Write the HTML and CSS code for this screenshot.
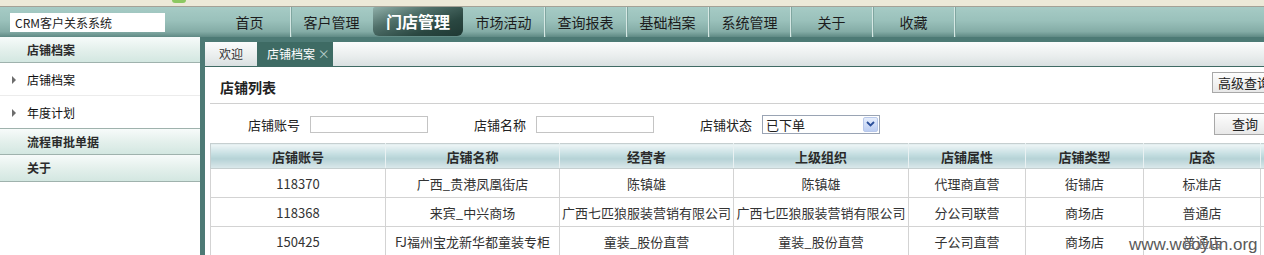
FILE: index.html
```
<!DOCTYPE html>
<html lang="zh">
  <head>
    <meta charset="UTF-8" />
    <title>CRM客户关系系统</title>
    <link rel="stylesheet" href="styles.css">
  </head>
  <body>
    <div class="browserbar">
      <span class="bit"></span>
    </div>

    <header class="topbar">
      <div class="logo">CRM客户关系系统</div>
      <nav class="mainnav">
        <a>首页</a>
        <a class="nosep">客户管理</a>
        <a class="aktiv">门店管理</a>
        <a>市场活动</a>
        <a>查询报表</a>
        <a>基础档案</a>
        <a>系统管理</a>
        <a>关于</a>
        <a>收藏</a>
      </nav>
    </header>

    <main>
      <aside class="sidemenu">
        <div class="menuhead first">店铺档案</div>
        <div class="menuitem">店铺档案</div>
        <div class="menuitem">年度计划</div>
        <div class="menuhead">流程审批单据</div>
        <div class="menuhead">关于</div>
      </aside>

      <section class="content">
        <div class="tabs">
          <span class="tab">欢迎</span>
          <span class="tab valgt">店铺档案 <i>×</i></span>
        </div>

        <div class="paneltitle">
          <h2>店铺列表</h2>
          <button class="knap avanceret">高级查询</button>
        </div>

        <div class="filter">
          <label>店铺账号</label>
          <input type="text" />
          <label>店铺名称</label>
          <input type="text" />
          <label>店铺状态</label>
          <div class="vaelger">
            <span>已下单</span>
            <span class="pil">
              <svg width="9" height="6" viewBox="0 0 9 6"><path d="M1 1 L4.5 4.5 L8 1" fill="none" stroke="#2b4f9a" stroke-width="1.8"/></svg>
            </span>
          </div>
          <button class="knap soeg">查询</button>
        </div>

        <table class="liste">
          <colgroup>
            <col style="width: 175px" />
            <col style="width: 174px" />
            <col style="width: 174px" />
            <col style="width: 175px" />
            <col style="width: 117px" />
            <col style="width: 118px" />
            <col style="width: 117px" />
            <col style="width: 117px" />
          </colgroup>
          <thead>
            <tr>
              <th>店铺账号</th>
              <th>店铺名称</th>
              <th>经营者</th>
              <th>上级组织</th>
              <th>店铺属性</th>
              <th>店铺类型</th>
              <th>店态</th>
              <th></th>
            </tr>
          </thead>
          <tbody>
            <tr>
              <td>118370</td>
              <td>广西_贵港凤凰街店</td>
              <td>陈镇雄</td>
              <td>陈镇雄</td>
              <td>代理商直营</td>
              <td>街铺店</td>
              <td>标准店</td>
              <td></td>
            </tr>
            <tr>
              <td>118368</td>
              <td>来宾_中兴商场</td>
              <td>广西七匹狼服装营销有限公司</td>
              <td>广西七匹狼服装营销有限公司</td>
              <td>分公司联营</td>
              <td>商场店</td>
              <td>普通店</td>
              <td></td>
            </tr>
            <tr>
              <td>150425</td>
              <td>FJ福州宝龙新华都童装专柜</td>
              <td>童装_股份直营</td>
              <td>童装_股份直营</td>
              <td>子公司直营</td>
              <td>商场店</td>
              <td>普通店</td>
              <td></td>
            </tr>
          </tbody>
        </table>
      </section>
    </main>

    <div class="watermark">www.wooyun.org</div>
  </body>
</html>
```

FILE: styles.css
```
* {
  padding: 0;
  margin: 0;
  box-sizing: border-box;
}

body {
  width: 1264px;
  height: 255px;
  overflow: hidden;
  position: relative;
  background-color: #4d7a75;
  font-family: "Noto Sans CJK SC", sans-serif;
  font-size: 13px;
  color: #222;
}

/* browser-stribe */

.browserbar {
  position: relative;
  height: 7px;
  background-color: #ece9d8;
  border-bottom: 1px solid #a4a196;
}

.bit {
  position: absolute;
  top: 0;
  left: 172px;
  width: 14px;
  height: 3px;
  border-radius: 0 0 4px 4px;
  background-color: #8cc862;
}

/* topbar */

.topbar {
  display: flex;
  height: 30px;
  background: linear-gradient(#a6cbc5, #9ac1bb 45%, #84aca6 82%, #5f8984);
}

.logo {
  flex-shrink: 0;
  width: 155px;
  height: 19px;
  margin: 6px 0 0 10px;
  padding-left: 5px;
  background-color: #fff;
  font-size: 12px;
  line-height: 19px;
  color: #222;
}

.mainnav {
  display: flex;
  margin-left: 44px;
}

.mainnav a {
  flex-shrink: 0;
  width: 82px;
  text-align: center;
  font-size: 14px;
  line-height: 30px;
  color: #1c1c1c;
  border-right: 1px solid #d6e8e4;
  box-shadow: 1px 0 0 #7fa6a0;
}

.mainnav a.nosep {
  border-right-color: transparent;
  box-shadow: none;
}

.mainnav a.aktiv {
  width: 90px;
  height: 29px;
  font-size: 16px;
  font-weight: bold;
  line-height: 28px;
  color: #fff;
  border-right: none;
  box-shadow: none;
  border-radius: 2px 2px 6px 6px;
  background: linear-gradient(160deg, #8fafa9 0%, #4f6f69 35%, #2a4741 70%, #1f3833 100%);
}

/* main */

main {
  display: flex;
  height: 218px;
}

.sidemenu {
  flex-shrink: 0;
  width: 200px;
  background-color: #fff;
  font-size: 12px;
}

.menuhead {
  height: 27px;
  padding-left: 27px;
  font-weight: bold;
  line-height: 26px;
  color: #2b2b2b;
  border-top: 1px solid #9fb2ad;
  border-bottom: 1px solid #9fb2ad;
  background: linear-gradient(#f7fbfa, #e4f0ec 50%, #d3e7e1);
}

.menuhead.first {
  height: 26px;
  border-top: none;
}

.menuhead + .menuhead {
  border-top: none;
}

.menuitem {
  position: relative;
  height: 33px;
  padding-left: 27px;
  line-height: 33px;
  color: #111;
  border-bottom: 1px solid #ececec;
}

.menuitem:nth-of-type(3) {
  height: 32px;
  border-bottom: none;
}

.menuitem::before {
  content: "";
  position: absolute;
  left: 12px;
  top: 13px;
  border-left: 4px solid #6d6d6d;
  border-top: 4px solid transparent;
  border-bottom: 4px solid transparent;
}

.content {
  flex-shrink: 0;
  width: 1071px;
  margin: 5px 0 0 5px;
  background-color: #fff;
}

/* faner */

.tabs {
  display: flex;
  height: 25px;
  font-size: 12px;
  background: linear-gradient(#fbfcfc, #e9eded 60%, #d9e0e1);
  border-bottom: 1px solid #3f6a64;
}

.tab {
  width: 52px;
  text-align: center;
  line-height: 24px;
  color: #333;
}

.tab.valgt {
  width: 76px;
  padding-left: 10px;
  text-align: left;
  color: #fff;
  background-color: #3e6b64;
}

.tab i {
  font-style: normal;
  color: #b9cfcb;
}

/* titel og filter */

.paneltitle {
  display: flex;
  justify-content: space-between;
  align-items: flex-start;
  height: 37px;
  margin: 0 0 0 5px;
  border-bottom: 1px solid #d0d0d0;
}

h2 {
  padding: 11px 0 0 10px;
  font-size: 14px;
  line-height: 18px;
  color: #222;
}

.knap {
  font-family: "Noto Sans CJK SC", sans-serif;
  font-size: 13px;
  color: #222;
  border: 1px solid #a8a8a8;
  background: linear-gradient(#fdfdfd, #e8e8e8);
}

.avanceret {
  height: 21px;
  margin-top: 5px;
  padding: 0 5px;
  line-height: 19px;
}

.filter {
  display: flex;
  align-items: center;
  height: 39px;
  padding-left: 43px;
  padding-top: 1px;
}

.filter label {
  width: 52px;
  margin-right: 10px;
  font-size: 13px;
  line-height: 17px;
  color: #222;
}

.filter input {
  width: 118px;
  height: 17px;
  margin-right: 46px;
  border: 1px solid #c4c4c4;
}

.vaelger {
  display: flex;
  justify-content: space-between;
  align-items: center;
  width: 118px;
  height: 19px;
  padding: 0 1px 0 3px;
  border: 1px solid #9aa4b4;
  line-height: 17px;
}

.pil {
  display: flex;
  align-items: center;
  justify-content: center;
  width: 15px;
  height: 15px;
  border: 1px solid #b8c8ea;
  border-radius: 2px;
  background: linear-gradient(#e6eefc, #bccdf2);
}

.soeg {
  height: 22px;
  margin-left: auto;
  padding: 0 17px;
  line-height: 20px;
}

/* tabel */

.liste {
  margin-left: 5px;
  table-layout: fixed;
  border-collapse: collapse;
  width: 1167px;
}

.liste th {
  height: 25px;
  font-size: 13px;
  font-weight: bold;
  color: #2a2a2a;
  border: 1px solid #c6cfd0;
  border-right-color: #e9f1f2;
  background: linear-gradient(#eef5f6, #c6dfe2 40%, #b5d2d6 60%, #dce9eb);
}

.liste td {
  height: 29px;
  text-align: center;
  font-size: 13px;
  color: #333;
  white-space: nowrap;
  border: 1px solid #d3d3d3;
}

.watermark {
  position: absolute;
  left: 1129px;
  top: 235px;
  font-family: "Liberation Sans", sans-serif;
  font-size: 17px;
  color: #5a5a5a;
  text-shadow: 0 0 2px #fff;
}
```
